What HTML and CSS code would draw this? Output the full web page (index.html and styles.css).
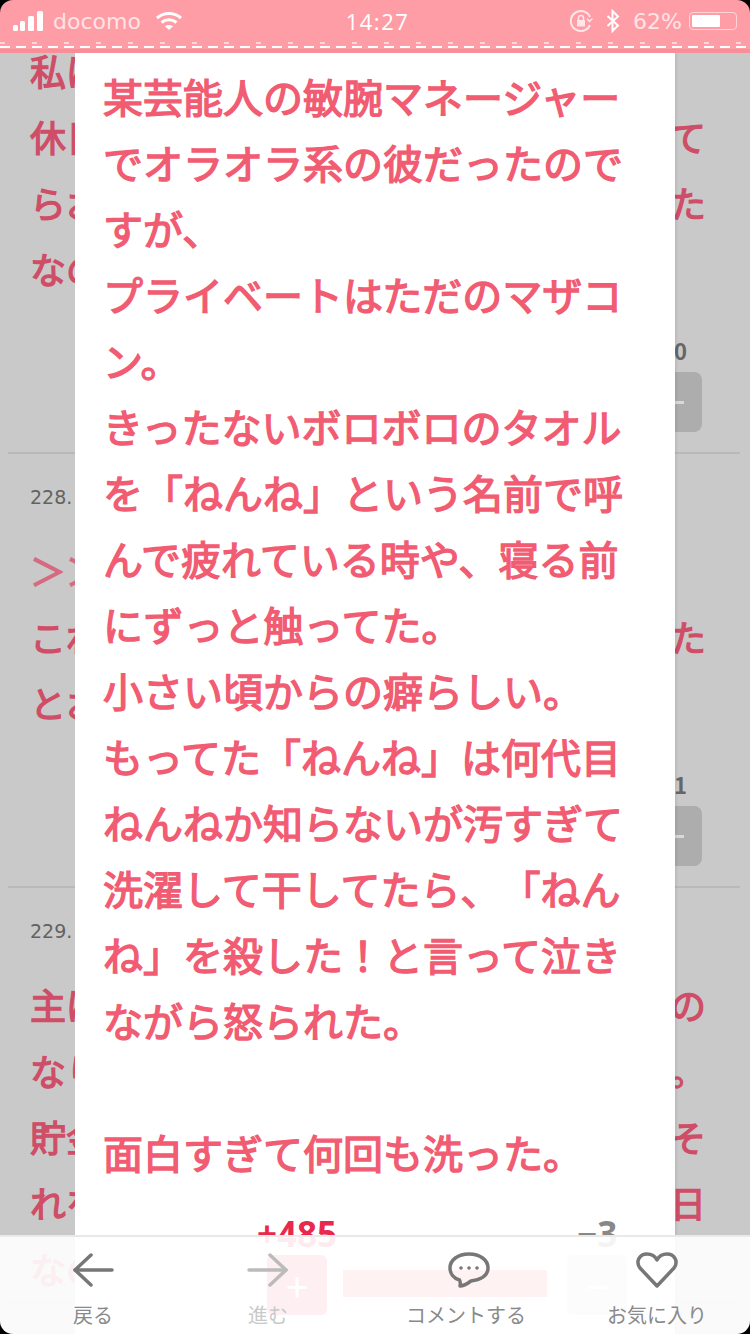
FILE: index.html
```html
<!DOCTYPE html>
<html lang="ja">
<head>
<meta charset="UTF-8">
<meta name="viewport" content="width=device-width, initial-scale=1.0">
<title>コメント</title>
<link rel="stylesheet" href="styles.css">
</head>
<body>

<div class="header">
  <div class="status">
    <div class="statusLeft">
      <svg width="34" height="20" viewBox="0 0 34 20"><rect x="1" y="14" width="5" height="6" rx="1.5" fill="#fff"/><rect x="8" y="10" width="5" height="10" rx="1.5" fill="#fff"/><rect x="16" y="5" width="6" height="15" rx="1.5" fill="#fff"/><rect x="25" y="0" width="6" height="20" rx="1.5" fill="#fff"/></svg>
      <span class="carrier">docomo</span>
      <svg class="wifi" width="28" height="20" viewBox="0 0 28 20" fill="none" stroke="#fff" stroke-width="3"><path d="M2 7C9 1 19 1 26 7"/><path d="M6.500 11.500C11 7.800 17 7.800 21.500 11.500"/><path d="M14 19L10 15.300C12.300 13.500 15.700 13.500 18 15.300Z" fill="#fff" stroke="none"/></svg>
    </div>
    <div class="time">14:27</div>
    <div class="statusRight">
      <svg width="24" height="24" viewBox="0 0 24 24" fill="none" stroke="#ffe6e8" stroke-width="2"><path d="M21 16A10 10 0 1 1 21 8"/><path d="M23.500 9.500L20.500 12.500L18 9.500" stroke-width="1.500"/><rect x="8" y="11" width="8" height="6.500" fill="#ffe6e8" stroke="none"/><path d="M9.500 11V9A2.500 2.500 0 0 1 14.500 9V11" stroke-width="1.500"/></svg>
      <svg class="bt" width="14" height="24" viewBox="0 0 14 24" fill="none" stroke="#fff" stroke-width="2"><path d="M1.500 7L12 16.500L6.500 22V2L12 7.500L1.500 17"/></svg>
      <span class="battPct">62%</span>
      <span class="battery"><span class="battFill"></span></span>
    </div>
  </div>
  <div class="stitch"></div>
</div>

<div class="list">
  <div class="comment first">
    <div class="line"><span>私は</span><span></span></div>
    <div class="line"><span>休日</span><span>て</span></div>
    <div class="line"><span>らお</span><span>た</span></div>
    <div class="line"><span>なの</span><span></span></div>
    <div class="votes">
      <div class="count">20</div>
      <div class="voteBtn"><span class="dash"></span></div>
    </div>
  </div>

  <div class="comment">
    <div class="num">228.</div>
    <div class="line"><span class="quote">＞＞</span><span></span></div>
    <div class="line"><span>これ</span><span>た</span></div>
    <div class="line"><span>とお</span><span></span></div>
    <div class="votes">
      <div class="count">11</div>
      <div class="voteBtn"><span class="dash"></span></div>
    </div>
  </div>

  <div class="comment">
    <div class="num">229.</div>
    <div class="line"><span>主は</span><span>の</span></div>
    <div class="line"><span>なり</span><span>。</span></div>
    <div class="line"><span>貯金</span><span>そ</span></div>
    <div class="line"><span>れを</span><span>日</span></div>
    <div class="line"><span>なの</span><span></span></div>
  </div>
</div>

<div class="modal">
  <p class="modalText">某芸能人の敏腕マネージャーでオラオラ系の彼だったのですが、<br>プライベートはただのマザコン。<br>きったないボロボロのタオルを「ねんね」という名前で呼んで疲れている時や、寝る前にずっと触ってた。<br>小さい頃からの癖らしい。<br>もってた「ねんね」は何代目ねんねか知らないが汚すぎて洗濯して干してたら、「ねんね」を殺した！と言って泣きながら怒られた。<br><br>面白すぎて何回も洗った。</p>
  <div class="modalVotes">
    <div class="voteCol">
      <div class="modalCount plus">+485</div>
      <div class="modalBtn plusBtn">+</div>
    </div>
    <div class="modalBar"></div>
    <div class="voteCol">
      <div class="modalCount minus">−3</div>
      <div class="modalBtn minusBtn">−</div>
    </div>
  </div>
</div>

<div class="tabBar">
  <div class="tab">
    <svg width="44" height="36" viewBox="0 0 44 36" fill="none" stroke="#777" stroke-width="3.500" stroke-linecap="round" stroke-linejoin="round"><path d="M20 3L4 18L20 33"/><path d="M4 18H41"/></svg>
    <span>戻る</span>
  </div>
  <div class="tab off">
    <svg width="44" height="36" viewBox="0 0 44 36" fill="none" stroke="#bbb" stroke-width="3.500" stroke-linecap="round" stroke-linejoin="round"><path d="M24 3L40 18L24 33"/><path d="M3 18H40"/></svg>
    <span>進む</span>
  </div>
  <div class="tab commentTab">
    <svg width="44" height="36" viewBox="0 0 44 36" fill="none" stroke="#777" stroke-width="3.500" stroke-linejoin="round"><path d="M22 2C33 2 41 8 41 16C41 24 33 28 24 29C20 32 16 34 13 34C13.500 32 13.500 30 12.500 28C6 26 3 21 3 16C3 8 11 2 22 2Z"/><circle cx="14" cy="16" r="1.800" fill="#777" stroke="none"/><circle cx="22" cy="16" r="1.800" fill="#777" stroke="none"/><circle cx="30" cy="16" r="1.800" fill="#777" stroke="none"/></svg>
    <span>コメントする</span>
  </div>
  <div class="tab">
    <svg width="44" height="36" viewBox="0 0 44 36" fill="none" stroke="#777" stroke-width="3.500" stroke-linejoin="round"><path d="M22 34L5 16C0 9 5 2 12 2C16 2 20 4 22 8C24 4 28 2 32 2C39 2 44 9 39 16Z"/></svg>
    <span>お気に入り</span>
  </div>
</div>

<div class="screenEdge"></div>

</body>
</html>
```

FILE: styles.css
```css
body {
  font-family: "Noto Sans CJK JP", "Noto Sans", sans-serif;
  background-color: #c9c9c9;
  margin: 0;
  width: 750px;
  height: 1334px;
  overflow: hidden;
  position: relative;
  text-spacing-trim: space-all;
}

/* status bar and stitched band */
.header {
  position: relative;
  z-index: 3;
  height: 53px;
  background-color: #ff9da6;
}

.status {
  height: 42px;
  display: grid;
  grid-template-columns: 1fr auto 1fr;
  align-items: center;
  padding: 0 13px 0 12px;
  color: #fff;
}

.statusLeft {
  display: flex;
  align-items: center;
}

.carrier {
  font-family: "DejaVu Sans", sans-serif;
  font-size: 22px;
  color: #ffe3e6;
  margin-left: 7px;
}

.wifi {
  margin-left: 14px;
}

.time {
  font-family: "Open Sans", sans-serif;
  font-size: 22px;
  letter-spacing: 1.5px;
  margin-left: 6px;
}

.statusRight {
  display: flex;
  align-items: center;
  justify-content: flex-end;
}

.bt {
  margin-left: 13px;
}

.battPct {
  font-family: "DejaVu Sans", sans-serif;
  font-size: 22px;
  color: #ffe3e6;
  margin-left: 13px;
}

.battery {
  display: block;
  width: 48px;
  height: 18px;
  border: 1px solid #ffd5d9;
  border-radius: 4px;
  padding: 2px;
  margin-left: 7px;
  box-sizing: border-box;
}

.battFill {
  display: block;
  width: 28px;
  height: 100%;
  border-radius: 1px;
  background-color: #fff;
}

.stitch {
  height: 11px;
  background-color: #ff9da6;
  background-image:
    repeating-linear-gradient(90deg, rgba(255,255,255,.55) 0 5px, transparent 5px 32px),
    repeating-linear-gradient(90deg, #fff 0 10px, transparent 10px 16px),
    linear-gradient(#f88e98, #f88e98);
  background-size: 100% 2px, 100% 2px, 100% 4px;
  background-position: 0 0, 0 4px, 0 7px;
  background-repeat: no-repeat;
}

/* comments behind the dialog */
.list {
  margin-top: -16px;
  padding: 0 10px 0 8px;
}

.comment {
  padding: 0 34px 0 22px;
  margin: 0;
  border-bottom: 2px solid #b9b9b9;
}

.num {
  font-family: "DejaVu Sans", sans-serif;
  padding-top: 31px;
  margin-bottom: 28px;
  font-size: 19px;
  line-height: 24px;
  color: #626262;
}

.line {
  display: flex;
  justify-content: space-between;
  height: 66px;
  font-size: 36px;
  line-height: 66px;
  color: #cf4d67;
  -webkit-text-stroke: 1.3px #cf4d67;
}

.quote {
  color: #d66a80;
  -webkit-text-stroke: 1.5px #d66a80;
}

.votes {
  padding: 36px 4px 20px 0;
  display: flex;
  flex-direction: column;
  align-items: flex-end;
}

.count {
  height: 26px;
  font-size: 22px;
  line-height: 26px;
  font-weight: 700;
  color: #666;
  margin-right: 15px;
  margin-bottom: 9px;
  -webkit-text-stroke: 0;
}

.voteBtn {
  width: 60px;
  height: 60px;
  border-radius: 8px;
  background-color: #adadad;
  display: flex;
  align-items: center;
  justify-content: center;
}

.dash {
  width: 24px;
  height: 3px;
  background-color: #d8d8d8;
}

/* dialog */
.modal {
  position: absolute;
  z-index: 1;
  left: 75px;
  top: 53px;
  bottom: 0;
  width: 600px;
  padding: 10px 28px 0;
  box-sizing: border-box;
  background-color: #fff;
  box-shadow: 2px 0 2px rgba(0, 0, 0, 0.07);
}

.modalText {
  margin: 0;
  font-size: 40px;
  line-height: 66px;
  color: #f15c72;
  -webkit-text-stroke: 1.4px #f15c72;
}

.modalVotes {
  display: flex;
  align-items: flex-end;
  gap: 16px;
  margin-top: 27px;
  padding: 0 18px 0 164px;
}

.voteCol {
  width: 60px;
  display: flex;
  flex-direction: column;
  align-items: center;
}

.modalCount {
  font-family: "Noto Sans", sans-serif;
  font-size: 35px;
  line-height: 43px;
  font-weight: 700;
  white-space: nowrap;
}

.plus {
  color: #e8294d;
}

.minus {
  color: #888;
}

.modalBtn {
  width: 60px;
  height: 60px;
  border-radius: 6px;
  color: #fff;
  font-size: 40px;
  line-height: 60px;
  text-align: center;
}

.plusBtn {
  background-color: #f0566f;
}

.minusBtn {
  background-color: #d6d6d6;
}

.modalBar {
  width: 204px;
  height: 27px;
  margin-bottom: 18px;
  margin-right: 4px;
  background-color: #f4707f;
}

/* bottom toolbar */
.tabBar {
  position: absolute;
  z-index: 2;
  left: 0;
  right: 0;
  bottom: 0;
  height: 99px;
  box-sizing: border-box;
  border-top: 2px solid #e9e9e9;
  background-color: rgba(255, 255, 255, 0.91);
  display: grid;
  grid-template-columns: 186px 164px 232px 150px;
  padding-top: 15px;
}

.tab {
  display: flex;
  flex-direction: column;
  align-items: center;
  font-size: 20px;
  line-height: 28px;
  color: #8a8a8a;
  white-space: nowrap;
}

.tab span {
  margin-top: 13px;
}

.commentTab svg {
  margin-left: 5px;
}

.tab.off {
  color: #c9c9c9;
}

.screenEdge {
  position: absolute;
  z-index: 4;
  top: 0;
  left: 0;
  right: 0;
  bottom: 0;
  border-radius: 13px;
  box-shadow: 0 0 0 14px #000;
}
```
